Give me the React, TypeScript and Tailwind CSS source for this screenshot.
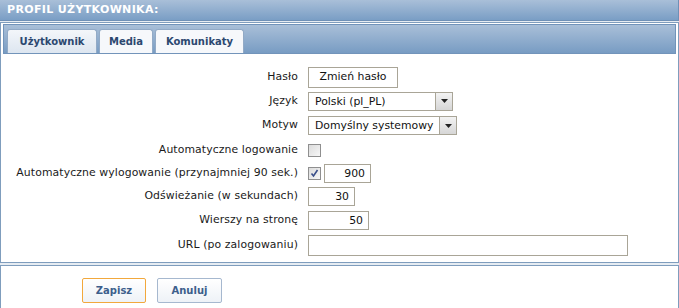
import React from 'react';

const font = { fontFamily: '"DejaVu Sans", Verdana, sans-serif' };

const Row: React.FC<{ label: string; h: string; children: React.ReactNode }> = ({ label, h, children }) => (
  <div className={`flex items-center ${h}`}>
    <div className="w-[305px] shrink-0 text-right pr-[10px] text-[10.85px] tracking-[0.1px] text-[#1a1a1a] whitespace-nowrap">{label}</div>
    <div className="flex items-center gap-[3px]">{children}</div>
  </div>
);

const Select: React.FC<{ value: string; w: string }> = ({ value, w }) => (
  <div className={`flex items-center h-[19px] border border-[#a9a597] bg-white ${w}`}>
    <span className="flex-1 px-[6px] text-[10.85px] text-[#111] leading-[17px] whitespace-nowrap overflow-hidden">{value}</span>
    <div className="w-[17px] h-[17px] bg-gradient-to-b from-[#f3f3f3] to-[#d6d6d6] border-l border-[#a9a597] flex items-center justify-center">
      <svg width="7" height="4" viewBox="0 0 7 4"><path d="M0 0h7L3.5 4z" fill="#222" /></svg>
    </div>
  </div>
);

const Input: React.FC<{ value?: string; w: string }> = ({ value, w }) => (
  <div className={`h-[19px] border border-[#a9a597] bg-white text-right pr-[5px] text-[10.85px] leading-[17px] text-[#111] ${w}`}>{value}</div>
);

const Check: React.FC<{ checked?: boolean }> = ({ checked }) => (
  <div className="w-[13px] h-[13px] border border-[#8f8f8f] bg-gradient-to-br from-[#dcdcdc] to-[#f7f7f7] flex items-center justify-center">
    {checked && (
      <svg width="9" height="9" viewBox="0 0 9 9"><path d="M1.5 4.5l2 2.5L7.5 1" stroke="#3a4f8a" strokeWidth="1.6" fill="none" /></svg>
    )}
  </div>
);

const tab = 'h-[24px] rounded-t-[3px] border border-b-0 border-[#92aac6] flex items-center justify-center text-[10px] font-bold text-[#2c4870]';

export default function App() {
  return (
    <div className="w-[679px] h-[308px] bg-[#e6ecf2] overflow-hidden" style={font}>
      {/* Header */}
      <div className="h-[21px] bg-gradient-to-b from-[#a9bfd8] to-[#7a9ec5] border-b border-r border-[#6f90b6] pl-[7px] flex items-center">
        <span className="text-white font-bold text-[11px] tracking-[0.35px]">PROFIL UŻYTKOWNIKA:</span>
      </div>

      {/* Main panel */}
      <div className="mt-[1px] h-[241px] bg-white border border-[#7f9dbd] pt-[1px] px-[2px]">
        <div className="h-[30px] bg-gradient-to-b from-[#a9bfd8] to-[#789cc3] border border-[#7294ba] flex items-end pl-[3px] gap-[2px]">
          <div className={`${tab} w-[90px] bg-gradient-to-b from-[#f3f6fa] to-[#dde6f0]`}>Użytkownik</div>
          <div className={`${tab} w-[54px] bg-[#f6f8fb]`}>Media</div>
          <div className={`${tab} w-[89px] bg-[#f6f8fb]`}>Komunikaty</div>
        </div>

        <div className="pt-[11px]">
          <Row label="Hasło" h="h-[24px]">
            <div className="h-[21px] w-[90px] border border-[#a9a597] bg-white flex items-center justify-center text-[10.85px] text-[#111]">Zmień hasło</div>
          </Row>
          <Row label="Język" h="h-[24px]">
            <Select value="Polski (pl_PL)" w="w-[145px]" />
          </Row>
          <Row label="Motyw" h="h-[25px]">
            <Select value="Domyślny systemowy" w="w-[149px]" />
          </Row>
          <Row label="Automatyczne logowanie" h="h-[24px]">
            <Check />
          </Row>
          <Row label="Automatyczne wylogowanie (przynajmniej 90 sek.)" h="h-[23px]">
            <Check checked />
            <Input value="900" w="w-[47px]" />
          </Row>
          <Row label="Odświeżanie (w sekundach)" h="h-[23px]">
            <Input value="30" w="w-[47px]" />
          </Row>
          <Row label="Wierszy na stronę" h="h-[24px]">
            <Input value="50" w="w-[61px]" />
          </Row>
          <Row label="URL (po zalogowaniu)" h="h-[26px]">
            <div className="h-[21px] w-[320px] border border-[#a9a597] bg-white" />
          </Row>
        </div>
      </div>

      {/* Footer */}
      <div className="mt-[2px] h-[44px] bg-white border border-[#7f9dbd] flex items-center pl-[81px] gap-[11px] pt-[6px]">
        <div className="h-[25px] w-[64px] rounded-[2px] border border-[#f2a83c] bg-gradient-to-b from-[#ffffff] to-[#eef2f7] flex items-center justify-center text-[10px] font-bold text-[#3d5f8c]">Zapisz</div>
        <div className="h-[25px] w-[65px] rounded-[2px] border border-[#a6b8cf] bg-gradient-to-b from-[#ffffff] to-[#eef2f7] flex items-center justify-center text-[10px] font-bold text-[#3d5f8c]">Anuluj</div>
      </div>
    </div>
  );
}
